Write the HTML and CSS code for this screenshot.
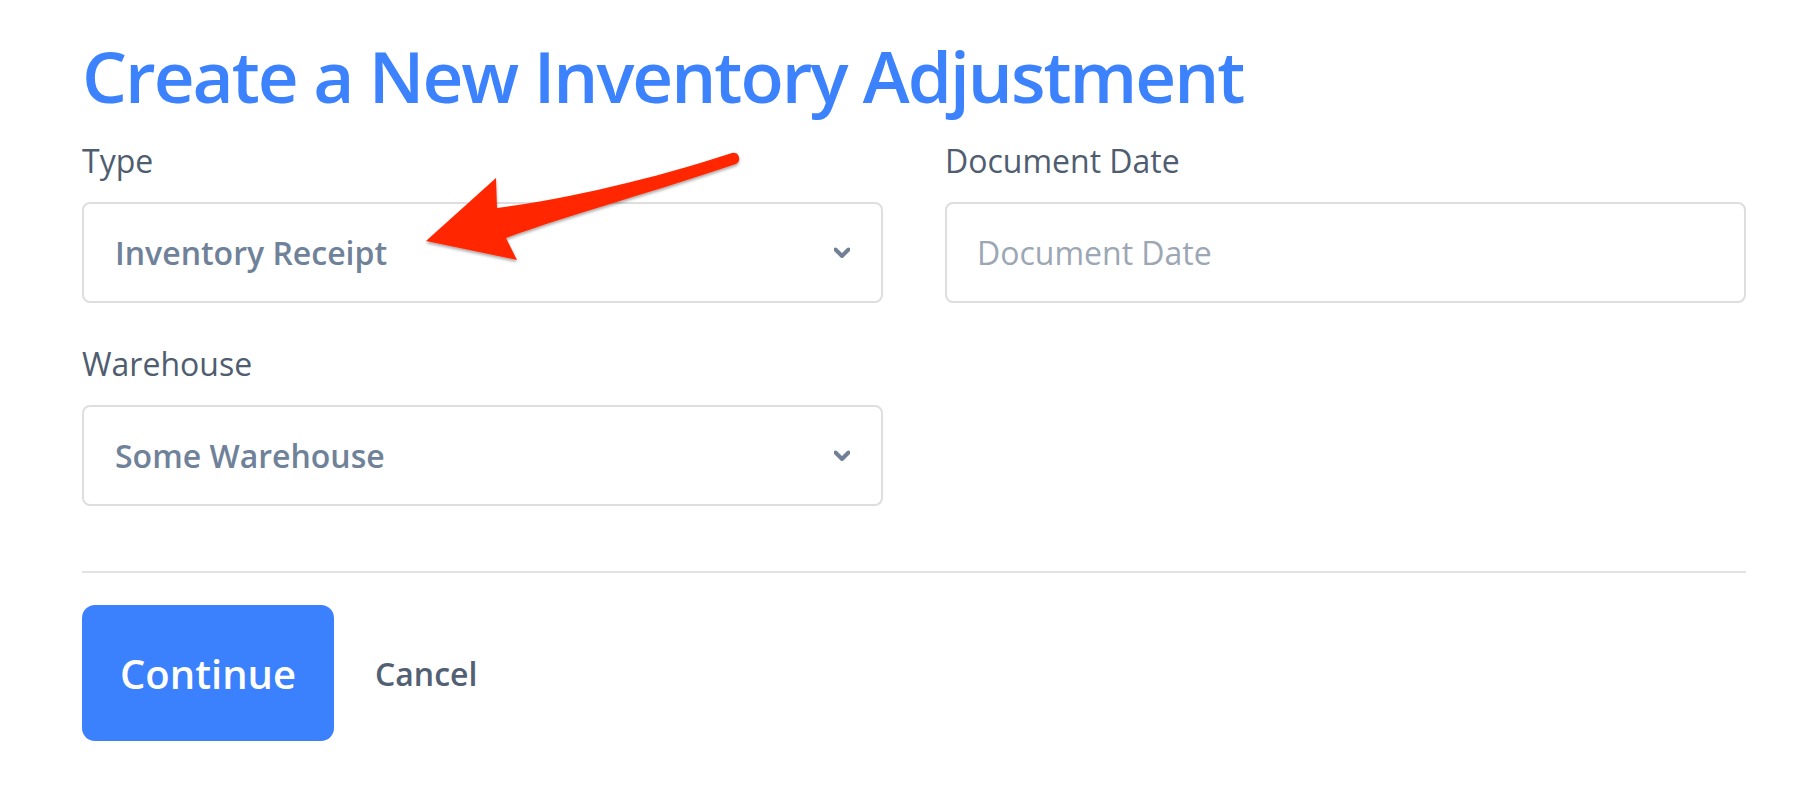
FILE: index.html
```html
<!DOCTYPE html>
<html lang="en">
<head>
<meta charset="utf-8">
<title>Create a New Inventory Adjustment</title>
<link rel="stylesheet" href="styles.css">
</head>
<body>
<div class="page">
  <h1 class="title">Create a New Inventory Adjustment</h1>
  <div class="form">
    <div class="field">
      <label class="label">Type</label>
      <div class="control select">
        <span class="select-value">Inventory Receipt</span>
        <svg class="chevron" width="16" height="11" viewBox="0 0 16 11"><path d="M1.5 2.5 L8 9 L14.5 2.5" fill="none" stroke="#718096" stroke-width="4" stroke-linecap="round" stroke-linejoin="round"/></svg>
      </div>
    </div>
    <div class="field">
      <label class="label">Document Date</label>
      <input class="control input" type="text" placeholder="Document Date">
    </div>
    <div class="field">
      <label class="label">Warehouse</label>
      <div class="control select">
        <span class="select-value">Some Warehouse</span>
        <svg class="chevron" width="16" height="11" viewBox="0 0 16 11"><path d="M1.5 2.5 L8 9 L14.5 2.5" fill="none" stroke="#718096" stroke-width="4" stroke-linecap="round" stroke-linejoin="round"/></svg>
      </div>
    </div>
  </div>
  <div class="divider"></div>
  <div class="actions">
    <button class="btn-primary" type="button">Continue</button>
    <a class="btn-link">Cancel</a>
  </div>
  <svg class="annotation" width="1820" height="798" viewBox="0 0 1820 798">
    <defs>
      <filter id="sh" x="-10%" y="-10%" width="120%" height="130%">
        <feDropShadow dx="0" dy="2" stdDeviation="1.5" flood-color="#000" flood-opacity="0.35"/>
      </filter>
    </defs>
    <path filter="url(#sh)" fill="#ff2600" d="M426 241 L496 178 L497 208 C565 199 650 180 732 153 C739 151 742 161 736 164 C660 190 575 213 506 238 L517 260 Z"/>
  </svg>
</div>
</body>
</html>
```

FILE: styles.css
```css
body {
  margin: 0;
  background: #ffffff;
  font-family: "Open Sans", "Noto Sans", sans-serif;
}

.page {
  position: relative;
  padding: 33px 74px 0 82px;
  min-height: 798px;
  box-sizing: border-box;
}

.title {
  margin: 0;
  font-size: 71px;
  font-weight: 600;
  line-height: 86px;
  letter-spacing: -2px;
  color: #3c82fc;
}

.form {
  display: grid;
  grid-template-columns: 1fr 1fr;
  column-gap: 62px;
  row-gap: 38px;
  margin-top: 19px;
}

.field {
  display: flex;
  flex-direction: column;
}

.label {
  font-size: 32px;
  line-height: 45px;
  color: #4f5d70;
  margin-bottom: 19px;
}

.control {
  box-sizing: border-box;
  width: 100%;
  height: 101px;
  border: 2px solid #dedede;
  border-radius: 8px;
  background: #ffffff;
  font-family: inherit;
  font-size: 32px;
}

.select {
  display: flex;
  align-items: center;
  padding: 0 31px 0 31px;
}

.select-value {
  flex: 1;
  font-weight: 600;
  color: #6f8299;
  line-height: 45px;
}

.chevron {
  display: block;
}

.input {
  padding: 0 30px;
  color: #4f5d70;
  outline: none;
}

.input::placeholder {
  color: #9ba7b4;
  opacity: 1;
}

.divider {
  height: 2px;
  background: #e3e3e3;
  margin-top: 65px;
}

.actions {
  display: flex;
  align-items: center;
  gap: 41px;
  margin-top: 32px;
}

.btn-primary {
  width: 252px;
  height: 136px;
  border: none;
  border-radius: 13px;
  background: #3b80fd;
  color: #ffffff;
  font-family: inherit;
  font-size: 40px;
  font-weight: 600;
  padding: 0;
}

.btn-link {
  font-size: 32px;
  font-weight: 600;
  color: #526074;
}

.annotation {
  position: absolute;
  top: 0;
  left: 0;
  pointer-events: none;
}
```
